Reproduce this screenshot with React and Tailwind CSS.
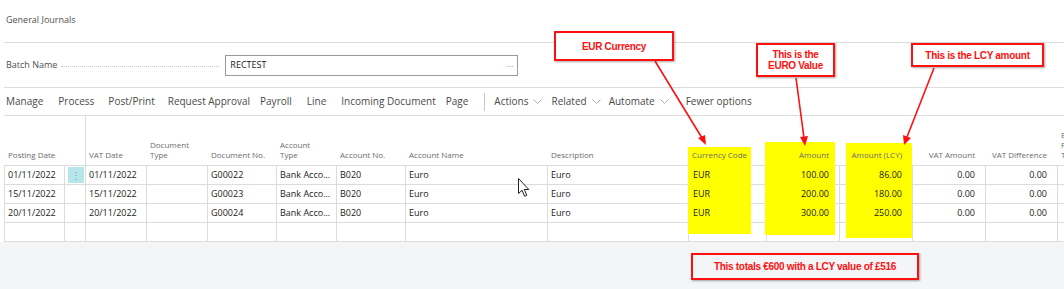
import React from "react";

const widths = [60, 21, 61, 61, 69, 60, 69, 142, 141, 78, 73, 73, 73, 72, 60];

const headers = [
  { label: "Posting Date" },
  { label: "" },
  { label: "VAT Date" },
  { label: "Document\nType" },
  { label: "Document No." },
  { label: "Account\nType" },
  { label: "Account No." },
  { label: "Account Name" },
  { label: "Description" },
  { label: "Currency Code" },
  { label: "Amount", right: true },
  { label: "Amount (LCY)", right: true },
  { label: "VAT Amount", right: true },
  { label: "VAT Difference", right: true },
  { label: "Bal. Gen.\nPosting\nType" },
];

const rows = [
  ["01/11/2022", "01/11/2022", "", "G00022", "Bank Acco...", "B020", "Euro", "Euro", "EUR", "100.00", "86.00", "0.00", "0.00", ""],
  ["15/11/2022", "15/11/2022", "", "G00023", "Bank Acco...", "B020", "Euro", "Euro", "EUR", "200.00", "180.00", "0.00", "0.00", ""],
  ["20/11/2022", "20/11/2022", "", "G00024", "Bank Acco...", "B020", "Euro", "Euro", "EUR", "300.00", "250.00", "0.00", "0.00", ""],
  ["", "", "", "", "", "", "", "", "", "", "", "", "", ""],
];

const rightCols = [10, 11, 12, 13];

const Chevron = () => (
  <svg width="9" height="6" viewBox="0 0 9 6" className="ml-[5px] mt-[1px]">
    <path d="M0.5 0.5 L4.5 4.5 L8.5 0.5" fill="none" stroke="#b0b0b0" strokeWidth="1" />
  </svg>
);

const Note = ({ className, children }) => (
  <div
    className={
      "absolute z-30 flex items-center justify-center border-2 border-[#ff1010] text-center font-['Liberation_Sans',Arial,sans-serif] text-[10px] font-bold leading-[11px] tracking-[-0.3px] text-[#ff1010] shadow-[1px_1px_2px_rgba(0,0,0,0.35)] " +
      className
    }
  >
    {children}
  </div>
);

export default function App() {
  return (
    <div className="relative isolate h-[289px] w-[1064px] overflow-hidden bg-[#f4f5f7] font-['Open_Sans',sans-serif] text-[#212121]">
      <div className="bg-white pl-[4px]">
        <div className="h-[43px] border-b border-[#dcdcdc] pl-[2px] pt-[13px] text-[9px] text-[#505050]">General Journals</div>

        <div className="flex h-[45px] items-center border-b border-[#dcdcdc] pl-[2px]">
          <span className="text-[9px] text-[#505050]">Batch Name</span>
          <span className="mx-[4px] mt-[3px] h-0 w-[158px] border-b border-dotted border-[#c8c8c8]"></span>
          <div className="ml-[2px] flex h-[21px] w-[293px] items-center justify-between border border-[#9a9a9a] px-[4px] text-[9px]">
            <span>RECTEST</span>
            <span className="pb-[3px] text-[#9a9a9a]">...</span>
          </div>
        </div>

        <div className="flex h-[28px] items-center border-b border-[#dcdcdc] pl-[2px] text-[10px] text-[#4a4a4a]">
          <span>Manage</span>
          <span className="ml-[15px]">Process</span>
          <span className="ml-[14px]">Post/Print</span>
          <span className="ml-[13px]">Request Approval</span>
          <span className="ml-[10px]">Payroll</span>
          <span className="ml-[15px]">Line</span>
          <span className="ml-[15px]">Incoming Document</span>
          <span className="ml-[10px]">Page</span>
          <span className="ml-[16px] h-[18px] w-px bg-[#c8c8c8]"></span>
          <span className="ml-[9px]">Actions</span>
          <Chevron />
          <span className="ml-[9px]">Related</span>
          <Chevron />
          <span className="ml-[8px]">Automate</span>
          <Chevron />
          <span className="ml-[17px]">Fewer options</span>
        </div>

        <div className="flex h-[50px] border-b border-[#dcdcdc]">
          {headers.map((h, i) => (
            <div
              key={i}
              style={{ width: widths[i] }}
              className={
                "flex shrink-0 items-end whitespace-pre-line px-[3px] pb-[5px] text-[8px] leading-[10px] text-[#6b6b6b] " +
                (i === 0 ? "ml-px " : "") +
                (i === 1 ? "border-r border-[#dcdcdc] " : "border-r border-transparent ") +
                (h.right ? "justify-end pr-[10px] text-right" : "")
              }
            >
              <span className="relative z-20">{h.label}</span>
            </div>
          ))}
        </div>

        {rows.map((r, ri) => (
          <div key={ri} className="flex h-[19px] border-b border-l border-[#dcdcdc]">
            {widths.map((w, ci) => {
              const di = ci === 0 ? 0 : ci - 1;
              const val = ci === 1 ? "" : r[di];
              const right = rightCols.includes(ci);
              const dots = ci === 1 && ri === 0;
              return (
                <div
                  key={ci}
                  style={{ width: w }}
                  className={
                    "flex shrink-0 items-center overflow-hidden whitespace-nowrap border-r border-[#dcdcdc] text-[9px] " +
                    (right ? "justify-end pr-[10px] " : ci === 9 ? "pl-[4px] " : "pl-[3px] ") +
                    (dots ? "justify-center bg-white p-[1px]" : "")
                  }
                >
                  {dots ? (
                    <span className="flex h-full w-full items-center justify-center bg-[#b6e6ea] text-[10px] text-[#7a9a9c]">⋮</span>
                  ) : (
                    <span className="relative z-20">{val}</span>
                  )}
                </div>
              );
            })}
          </div>
        ))}
      </div>

      <div className="absolute left-[688px] top-[147px] z-10 h-[87px] w-[63px] bg-[#ffff00]"></div>
      <div className="absolute left-[765px] top-[142px] z-10 h-[93px] w-[70px] bg-[#ffff00]"></div>
      <div className="absolute left-[846px] top-[143px] z-10 h-[95px] w-[66px] bg-[#ffff00]"></div>

      <Note className="left-[554px] top-[31px] h-[30px] w-[120px] bg-white">EUR Currency</Note>
      <Note className="left-[756px] top-[43px] h-[34px] w-[79px] bg-white">
        This is the
        <br />
        EURO Value
      </Note>
      <Note className="left-[911px] top-[43px] h-[24px] w-[133px] bg-white">This is the LCY amount</Note>
      <Note className="left-[691px] top-[253px] h-[27px] w-[228px] bg-[#f4f5f7]">This totals €600 with a LCY value of £516</Note>

      <svg className="pointer-events-none absolute inset-0 z-30" width="1064" height="289">
        <g stroke="#ff1010" strokeWidth="1.6" fill="#ff1010">
          <line x1="655" y1="61" x2="702" y2="138" />
          <polygon points="706,145 698,138 705,135" stroke="none" />
          <line x1="796" y1="78" x2="804" y2="138" />
          <polygon points="805,146 800,137 808,136" stroke="none" />
          <line x1="934" y1="68" x2="907" y2="137" />
          <polygon points="904,145 903,135 911,138" stroke="none" />
        </g>
      </svg>

      <svg className="pointer-events-none absolute left-[518px] top-[178px] z-30" width="13" height="20" viewBox="0 0 13 20">
        <path d="M0.5 0.5 L0.5 15.5 L4 12.3 L6.6 18.3 L8.8 17.3 L6.3 11.5 L10.8 11.5 Z" fill="#fff" stroke="#222" strokeWidth="1" strokeLinejoin="round" />
      </svg>
    </div>
  );
}
